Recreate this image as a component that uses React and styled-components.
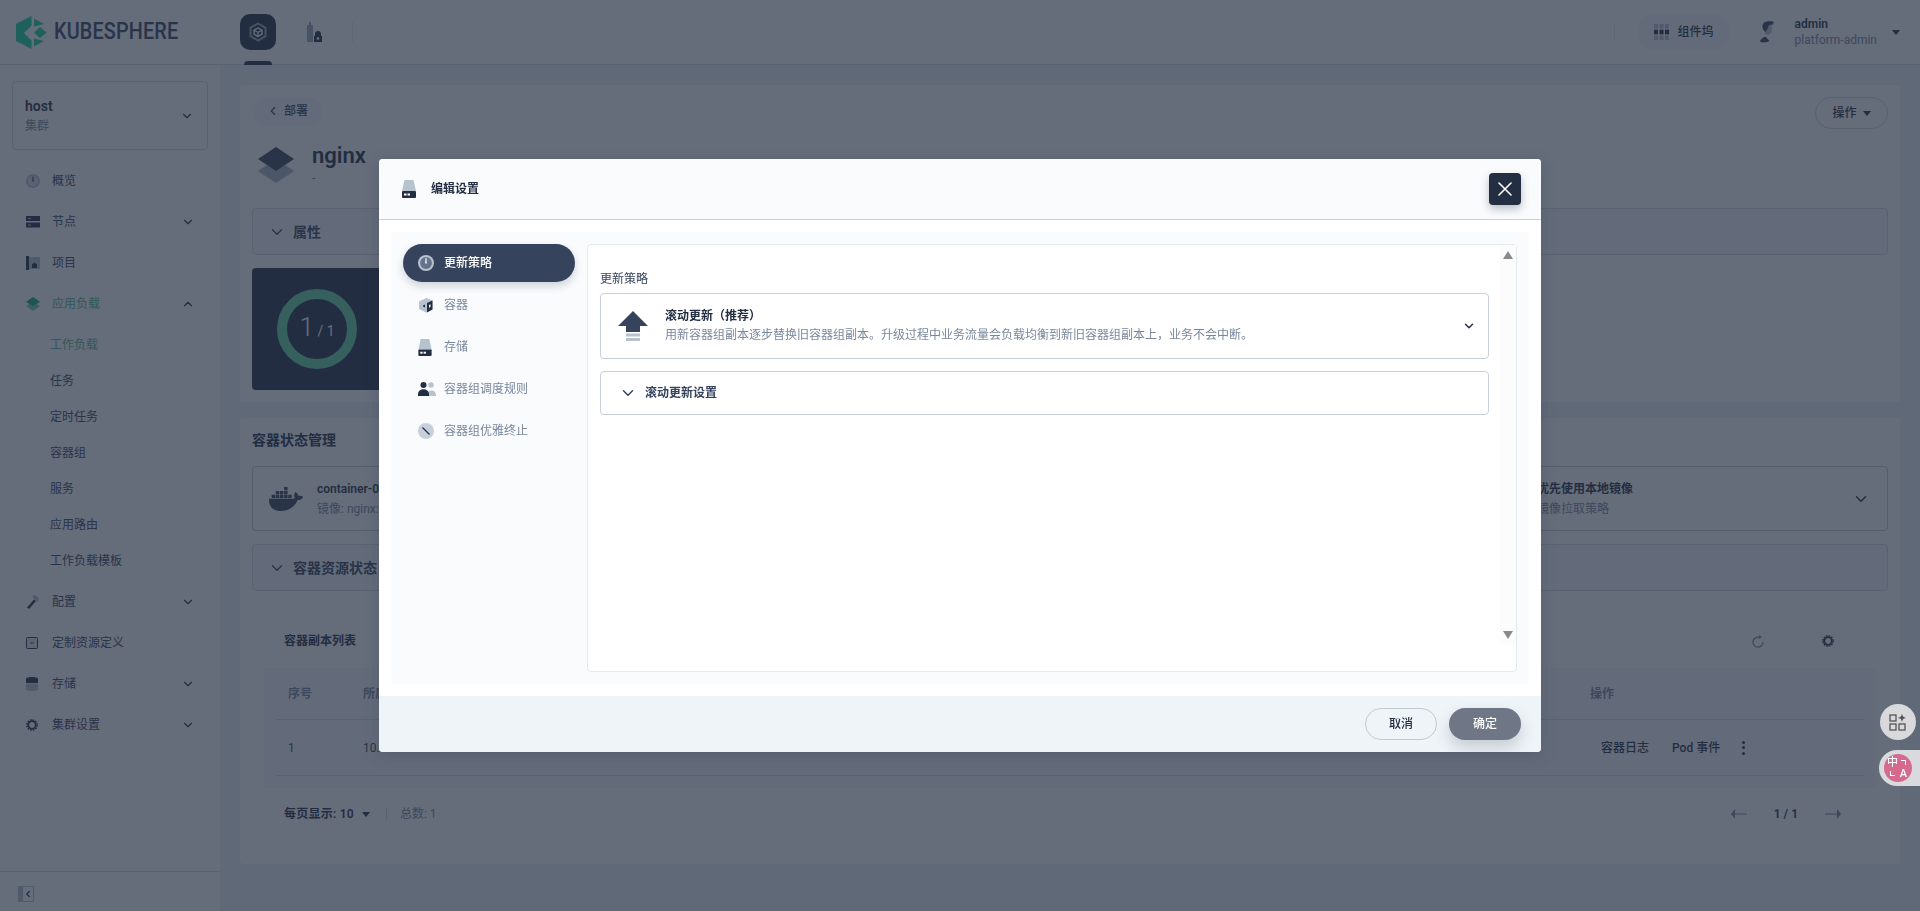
import React from 'react'
import styled, { createGlobalStyle } from 'styled-components'
import { ChevronDown, ChevronUp, ChevronLeft, X } from 'lucide-react'
import { FaDocker } from 'react-icons/fa'

const dark = '#242e42'
const mid = '#36435c'
const soft = '#79879c'
const light = '#b6c2cd'
const line = '#d8dee5'

const GlobalStyle = createGlobalStyle`
  html, body {
    margin: 0;
    height: 100%;
    overflow: hidden;
    background: #eff4f9;
  }
  * { box-sizing: border-box; }
  body {
    font-family: Roboto, "Noto Sans CJK SC", sans-serif;
    font-size: 12px;
    line-height: 20px;
    color: ${dark};
  }
`

/* icons */
const LogoIcon = () => (
  <svg width="31" height="33" viewBox="0 0 31 33" fill="#0fd69a">
    <path d="M15.5 0 0 8v17l15.5 8v-8.5L8 17l7.5-7.5z" />
    <path d="M18 2.5 28 8l-10 2.5zM18 22.5 28 25l-10 5.5z" />
    <path d="M24 11l6.5 5.5L24 22l-6-5.5z" />
  </svg>
)

const ClusterIcon = ({ fg = '#fff', bg = '#fff' }) => (
  <svg width="20" height="20" viewBox="0 0 20 20" fill="none">
    <path d="M10 1.5 17.5 5.8v8.4L10 18.5l-7.5-4.3V5.8z" stroke={bg} strokeWidth="2" opacity=".8" />
    <path d="M10 6 14 8.2v4L10 14.4 6 12.2v-4z" stroke={fg} strokeWidth="1.4" />
    <path d="M6 8.2 10 10.4l4-2.2M10 10.4v4" stroke={fg} strokeWidth="1.2" />
  </svg>
)

const LockIcon = () => (
  <svg width="16" height="22" viewBox="0 0 16 22">
    <path d="M1 4h2V1h2v3h2v17H1z" fill="#9aa7b5" />
    <path d="M8 21v-6h1v-2a3 3 0 0 1 6 0v2h1v6z" fill={dark} />
    <circle cx="12" cy="17.5" r="1.3" fill="#fff" />
  </svg>
)

const Gauge = ({ size = 14, tick = dark, bg = light, core = '#d8dee5' }) => (
  <svg width={size} height={size} viewBox="0 0 14 14">
    <circle cx="7" cy="7" r="7" fill={bg} />
    <circle cx="7" cy="7" r="5.2" fill={core} />
    <path d="M6.6 2.6h.8l.3 4.900H6.300z" fill={tick} />
  </svg>
)

const NodeIcon = () => (
  <svg width="14" height="12" viewBox="0 0 14 12">
    <rect y="0" width="14" height="5" fill={dark} />
    <rect y="6.5" width="14" height="5" fill={dark} />
    <rect x="2" y="2" width="3" height="1" fill={light} />
    <rect x="2" y="8.5" width="3" height="1" fill={light} />
  </svg>
)

const ProjectIcon = () => (
  <svg width="14" height="14" viewBox="0 0 14 14">
    <rect width="14" height="12" y="1" fill={light} />
    <rect width="3" height="14" fill={dark} />
    <path d="M6 12V8.5l2.5-2 2.5 2V12z" fill={dark} />
  </svg>
)

const Layers = ({ size = 14, top = dark, bottom = light }) => (
  <svg width={size} height={size} viewBox="0 0 36 36">
    <path d="M18 12 36 24 18 36 0 24z" fill={bottom} />
    <path d="M18 0 36 12 18 24 0 12z" fill={top} />
  </svg>
)

const HammerIcon = () => (
  <svg width="14" height="14" viewBox="0 0 14 14">
    <path d="M8 4.5 10 6 3 14l-2-1.5z" fill={dark} />
    <path d="M6.5 1.5 9 0l4 3-1 4.5L8 4z" fill={light} />
  </svg>
)

const CrdIcon = () => (
  <svg width="12" height="12" viewBox="0 0 12 12" fill="none">
    <rect x=".5" y=".5" width="11" height="11" rx="1" fill={light} fillOpacity=".35" stroke={dark} />
    <path d="M4.2 5 6 6.8 7.8 5" stroke={dark} />
  </svg>
)

const DiskIcon = ({ w = 14, h = 18 }) => (
  <svg width={w} height={h} viewBox="0 0 14 18">
    <path d="M2.5 0h9L14 11H0z" fill={light} />
    <rect y="11" width="14" height="7" rx="1" fill={dark} />
    <rect x="2" y="13.5" width="2.5" height="2" fill="#fff" />
    <rect x="5.5" y="13.5" width="2.5" height="2" fill="#fff" />
  </svg>
)

const DbIcon = () => (
  <svg width="12" height="14" viewBox="0 0 12 14">
    <path d="M0 2c0-2.6 12-2.6 12 0v4H0z" fill={dark} />
    <path d="M0 6.5h12V12c0 2.6-12 2.6-12 0z" fill={light} />
  </svg>
)

const GearIcon = ({ size = 12 }) => (
  <svg width={size} height={size} viewBox="0 0 12 12" fill="none">
    <circle cx="6" cy="6" r="3.8" stroke={dark} strokeWidth="1.8" />
    <circle cx="6" cy="6" r="5.2" stroke={dark} strokeWidth="1.4" strokeDasharray="1.6 1.13" />
  </svg>
)

const BoxIcon = () => (
  <svg width="16" height="16" viewBox="0 0 16 16">
    <path d="M1 4.5 8.5 1l6 2.5v9L8 15.5 1 12z" fill={light} />
    <path d="M9 6l5.5-2.5v9L9 15.5z" fill={dark} />
    <path d="M5 8.5l2-1v3l-2-1z" fill={dark} />
    <path d="M11 8l1.5-.7V10L11 10.7z" fill="#fff" />
  </svg>
)

const UsersIcon = () => (
  <svg width="18" height="14" viewBox="0 0 18 14">
    <circle cx="13" cy="3" r="2.8" fill={light} />
    <path d="M9 13c0-6 9-6 9 0v1H9z" fill={light} />
    <circle cx="5.5" cy="3" r="3" fill={dark} />
    <path d="M0 12c0-6.5 11-6.5 11 0v2H0z" fill={dark} />
  </svg>
)

const SlashIcon = () => (
  <svg width="16" height="16" viewBox="0 0 16 16">
    <circle cx="8" cy="8" r="8" fill="#c7d0da" />
    <path d="M4.5 4.5l7 7" stroke={dark} strokeWidth="1.3" />
  </svg>
)

const UpdateIcon = () => (
  <svg width="30" height="30" viewBox="0 0 30 30">
    <path d="M15 0 30 15H22v6H8v-6H0z" fill={mid} />
    <rect x="8" y="22.5" width="14" height="3" fill={light} />
    <rect x="8" y="27" width="14" height="3" fill={light} />
  </svg>
)

const RefreshIcon = () => (
  <svg width="12" height="13" viewBox="0 0 12 13" fill="none">
    <path d="M7.5 2.4A5 5 0 1 0 11 7" stroke={soft} strokeWidth="1.3" />
    <path d="M7 0l3 2.3-3 1.7z" fill={soft} />
  </svg>
)

const DockIcon = () => (
  <svg width="15" height="16" viewBox="0 0 15 16">
    {[0, 5.5, 11].map(x => [0, 5.7, 11.4].map(y => (
      <rect key={`${x}-${y}`} x={x} y={y} width="4" height="4.6" fill={y === 5.7 ? dark : light} />
    )))}
  </svg>
)

const AvatarIcon = () => (
  <svg width="16" height="22" viewBox="0 0 16 22">
    <path d="M6 2c3-2.500 8-2 9 .5l-2 2-.5 7-3.500 2.500-3-1z" fill={light} />
    <path d="M5 1.500C8 0 13 0 15 1l-2 2.500c-2.500 0-3.500 1-4 3L6.500 11C3 9 2.500 3.500 5 1.500z" fill={mid} />
    <path d="M1 20.500c.5-2.500 3-4 5.500-5l4 4.500c-2 1.500-7 2-9.500.5z" fill={mid} />
  </svg>
)

const GridPlusIcon = () => (
  <svg width="18" height="18" viewBox="0 0 18 18" fill="none" stroke="#555">
    <rect x="1" y="2" width="6" height="6" strokeWidth="1.3" />
    <rect x="1" y="11" width="6" height="6" strokeWidth="1.3" />
    <rect x="10" y="11" width="6" height="6" strokeWidth="1.3" />
    <path d="M13 .5C13.500 3 14 4 17 5 14 5.500 13.500 6.500 13 9.500 12.500 6.500 12 5.500 9 5 12 4 12.500 3 13 .5z" fill="#555" strokeWidth="0" />
  </svg>
)

const Ring = () => (
  <svg width="80" height="80" viewBox="0 0 80 80" fill="none">
    <circle cx="40" cy="40" r="35" stroke="#5fd6a0" strokeWidth="10" />
  </svg>
)

/* page chrome */
const Page = styled.div`
  height: 911px;
  display: flex;
  flex-direction: column;
  overflow: hidden;
`

const TopBar = styled.header`
  height: 65px;
  flex: none;
  background: #fff;
  border-bottom: 1px solid ${line};
  display: flex;
  align-items: center;
`

const Brand = styled.div`
  width: 240px;
  padding-left: 16px;
  display: flex;
  align-items: center;
  gap: 7px;
`

const BrandName = styled.span`
  font-size: 23px;
  font-weight: 500;
  line-height: 32px;
  letter-spacing: .2px;
  color: ${mid};
  transform: scaleX(.86);
  transform-origin: left center;
`

const TabButton = styled.div`
  position: relative;
  width: 36px;
  height: 36px;
  margin-right: 20px;
  border-radius: ${p => (p.$active ? '10px' : '50%')};
  background: ${p => (p.$active ? dark : 'transparent')};
  display: flex;
  align-items: center;
  justify-content: center;
  &::after {
    content: '';
    display: ${p => (p.$active ? 'block' : 'none')};
    position: absolute;
    left: 4px;
    right: 4px;
    bottom: -15px;
    height: 4px;
    border-radius: 4px 4px 0 0;
    background: ${dark};
  }
`

const BarDivider = styled.div`
  width: 1px;
  height: 20px;
  background: #e8edf2;
`

const BarRight = styled.div`
  margin-left: auto;
  display: flex;
  align-items: center;
`

const DockPill = styled.div`
  width: 93px;
  height: 36px;
  margin-left: 22px;
  padding-left: 17px;
  border-radius: 18px;
  background: #f9fbfd;
  display: flex;
  align-items: center;
  gap: 9px;
  font-weight: 500;
`

const UserBlock = styled.div`
  margin-left: 29px;
  padding-right: 20px;
  display: flex;
  align-items: center;
`

const UserText = styled.div`
  margin-left: 20px;
  margin-right: 15px;
  line-height: 16px;
`

const UserName = styled.div`
  font-weight: 600;
`

const UserRole = styled.div`
  color: ${soft};
`

const Caret = styled.span`
  display: inline-block;
  width: 0;
  height: 0;
  margin-left: ${p => p.$ml || 0}px;
  border-left: 4.5px solid transparent;
  border-right: 4.5px solid transparent;
  border-top: 5px solid ${dark};
`

const Content = styled.div`
  flex: 1;
  display: flex;
  min-height: 0;
`

/* sidebar */
const Sidebar = styled.aside`
  width: 220px;
  flex: none;
  padding-top: 16px;
  background: #fff;
  display: flex;
  flex-direction: column;
`

const ClusterBox = styled.div`
  height: 69px;
  margin: 0 12px;
  padding: 0 13px 0 12px;
  background: #fff;
  border: 1px solid ${line};
  border-radius: 4px;
  display: flex;
  align-items: center;
  justify-content: space-between;
`

const ClusterName = styled.div`
  font-size: 14px;
  font-weight: 600;
`

const ClusterKind = styled.div`
  color: ${soft};
`

const NavList = styled.nav`
  margin-top: 10px;
`

const NavRow = styled.div`
  height: 41px;
  padding: 0 26px;
  display: flex;
  align-items: center;
  color: ${p => (p.$active ? '#55bc8a' : mid)};
`

const NavIcon = styled.span`
  width: 26px;
  flex: none;
  display: flex;
  align-items: center;
`

const NavArrow = styled.span`
  margin-left: auto;
  margin-right: -1px;
  display: flex;
  color: ${dark};
`

const SubList = styled.div`
  padding: 3px 0 2px;
`

const SubRow = styled.div`
  height: 36px;
  padding-left: 50px;
  display: flex;
  align-items: center;
  color: ${p => (p.$active ? '#55bc8a' : mid)};
`

const SideFoot = styled.div`
  height: 40px;
  margin-top: auto;
  padding: 5px 0 0 18px;
  border-top: 1px solid ${line};
  display: flex;
  align-items: center;
`

const CollapseBtn = styled.div`
  width: 16px;
  height: 16px;
  background: ${light};
  display: flex;
  align-items: center;
  justify-content: flex-end;
  padding-right: 1px;
  & > span {
    width: 10px;
    height: 14px;
    background: #fff;
    display: flex;
    align-items: center;
    justify-content: center;
  }
`

/* main column */
const Main = styled.main`
  flex: 1;
  min-width: 0;
  padding: 20px 20px 0;
  display: flex;
  flex-direction: column;
  gap: 16px;
`

const Card = styled.section`
  height: ${p => p.$h}px;
  padding: 12px;
  background: #fff;
  border-radius: 4px;
`

const TopRow = styled.div`
  display: flex;
  justify-content: space-between;
  align-items: flex-start;
`

const BackPill = styled.div`
  width: 71px;
  height: 28px;
  padding-left: 14px;
  border-radius: 14px;
  background: #f9fbfd;
  display: flex;
  align-items: center;
  gap: 4px;
  color: ${mid};
  font-weight: 500;
`

const OutlineBtn = styled.div`
  width: ${p => p.$w}px;
  height: 32px;
  border: 1px solid ${p => (p.$strong ? '#c1c9d1' : line)};
  border-radius: 16px;
  display: flex;
  align-items: center;
  justify-content: center;
  gap: 6px;
  font-weight: 500;
`

const TitleRow = styled.div`
  margin-top: 18px;
  padding-left: 6px;
  height: 36px;
  display: flex;
  align-items: center;
  gap: 18px;
`

const TitleName = styled.div`
  font-size: 22px;
  font-weight: 600;
  line-height: 26px;
`

const TitleDesc = styled.div`
  color: ${soft};
  line-height: 18px;
`

const FoldBox = styled.div`
  height: 47px;
  margin-top: ${p => p.$mt}px;
  padding-left: 15px;
  border: 1px solid ${line};
  border-radius: 4px;
  background: #f9fbfd;
  display: flex;
  align-items: center;
  gap: 7px;
  font-size: 14px;
  font-weight: 600;
  color: ${mid};
`

const StatusBlock = styled.div`
  width: 300px;
  height: 122px;
  margin-top: 13px;
  padding-left: 25px;
  border-radius: 4px;
  background: ${dark};
  display: flex;
  align-items: center;
`

const RingWrap = styled.div`
  position: relative;
  width: 80px;
  height: 80px;
  display: flex;
  align-items: center;
  justify-content: center;
`

const RingText = styled.div`
  position: absolute;
  color: #fff;
  font-size: 14px;
  & > b {
    font-size: 26px;
    font-weight: 300;
  }
`

const SectionTitle = styled.div`
  font-size: 14px;
  font-weight: 600;
`

const ContainerBox = styled.div`
  height: 65px;
  margin-top: 16px;
  padding: 0 17px 0 16px;
  border: 1px solid #c7d0da;
  border-radius: 4px;
  display: flex;
  align-items: center;
`

const BoxTitle = styled.div`
  font-weight: 600;
`

const BoxDesc = styled.div`
  color: ${soft};
`

const BoxGrow = styled.div`
  flex: 1;
  margin-left: 14px;
`

const BoxRight = styled.div`
  width: 315px;
`

const TablePanel = styled.div`
  margin-top: 12px;
  height: 249px;
  padding: 25px 12px 0;
`

const PanelHead = styled.div`
  height: 26px;
  padding: 0 42px 0 20px;
  display: flex;
  align-items: center;
  font-weight: 600;
`

const PanelTools = styled.div`
  margin-left: auto;
  display: flex;
  align-items: center;
  gap: 58px;
`

const Band = styled.div`
  margin-top: 14px;
  padding: 0 12px 12px;
  background: #f9fbfd;
`

const Row = styled.div`
  height: ${p => p.$h}px;
  border-bottom: 1px solid ${line};
  padding-left: 12px;
  display: flex;
  align-items: center;
`

const CellIndex = styled.div`
  width: 75px;
  color: ${p => (p.$head ? soft : mid)};
  font-weight: ${p => (p.$head ? 600 : 400)};
`

const CellGrow = styled.div`
  flex: 1;
  color: ${p => (p.$head ? soft : mid)};
  font-weight: ${p => (p.$head ? 600 : 400)};
`

const CellActions = styled.div`
  width: 274px;
  display: flex;
  align-items: center;
  font-weight: 600;
  color: ${p => (p.$head ? soft : dark)};
`

const ActionLink = styled.span`
  margin-left: ${p => p.$ml}px;
  font-weight: 500;
`

const Kebab = styled.span`
  margin-left: 22px;
  display: flex;
  flex-direction: column;
  gap: 2.5px;
  & > i {
    width: 3px;
    height: 3px;
    border-radius: 50%;
    background: ${dark};
  }
`

const Pager = styled.div`
  height: 52px;
  padding: 0 35px 0 20px;
  display: flex;
  align-items: center;
  font-weight: 600;
`

const PagerSize = styled.span`
  letter-spacing: .25px;
`

const PagerDivider = styled.div`
  width: 1px;
  height: 14px;
  margin: 0 13px 0 16px;
  background: ${line};
`

const PagerTotal = styled.span`
  color: ${soft};
  font-weight: 400;
`

const PagerNav = styled.div`
  margin-left: auto;
  display: flex;
  align-items: center;
  gap: 27px;
`

const ArrowIcon = styled.svg`
  display: block;
  transform: ${p => (p.$flip ? 'scaleX(-1)' : 'none')};
`

/* modal */
const Overlay = styled.div`
  position: fixed;
  inset: 0;
  background: rgba(35, 45, 65, .7);
  display: flex;
  align-items: center;
  justify-content: center;
`

const Modal = styled.div`
  width: 1162px;
  height: 593px;
  border-radius: 4px;
  background: #fff;
  box-shadow: 0 4px 16px 0 rgba(35, 45, 65, .2);
  display: flex;
  flex-direction: column;
  overflow: hidden;
`

const ModalHead = styled.div`
  height: 61px;
  flex: none;
  padding: 0 20px 0 23px;
  background: #f9fbfd;
  border-bottom: 1px solid #c7d0da;
  display: flex;
  align-items: center;
  gap: 15px;
  font-weight: 600;
`

const CloseBtn = styled.div`
  width: 32px;
  height: 32px;
  margin-left: auto;
  border-radius: 4px;
  background: ${dark};
  color: #fff;
  box-shadow: 0 4px 8px 0 rgba(36, 46, 66, .3);
  display: flex;
  align-items: center;
  justify-content: center;
`

const ModalBody = styled.div`
  flex: 1;
  min-height: 0;
  padding: 12px;
`

const InnerPanel = styled.div`
  height: 100%;
  padding: 12px;
  background: #f9fbfd;
  border-radius: 4px;
  display: flex;
  gap: 12px;
`

const StepList = styled.div`
  width: 172px;
  flex: none;
  display: flex;
  flex-direction: column;
  gap: 4px;
`

const Step = styled.div`
  height: 38px;
  padding-left: 15px;
  border-radius: 19px;
  display: flex;
  align-items: center;
  gap: 10px;
  background: ${p => (p.$active ? mid : 'transparent')};
  color: ${p => (p.$active ? '#fff' : soft)};
  font-weight: ${p => (p.$active ? 500 : 400)};
  box-shadow: ${p => (p.$active ? '0 4px 8px 0 rgba(36, 46, 66, .2)' : 'none')};
`

const StepIcon = styled.span`
  width: 19px;
  margin-right: -3px;
  display: flex;
  align-items: center;
`

const Pane = styled.div`
  flex: 1;
  min-width: 0;
  border: 1px solid #e3e9ef;
  border-radius: 4px;
  background: #fff;
  display: flex;
  align-items: flex-start;
`

const PaneForm = styled.div`
  flex: 1;
  min-width: 0;
  padding: 24px 11px 0 12px;
`

const FieldLabel = styled.div`
  margin-bottom: 4px;
  color: ${mid};
`

const SelectBox = styled.div`
  height: 66px;
  padding: 0 12px 0 17px;
  border: 1px solid #c7d0da;
  border-radius: 4px;
  display: flex;
  align-items: center;
  gap: 17px;
`

const SelectText = styled.div`
  flex: 1;
  line-height: 19px;
`

const SelectTitle = styled.div`
  font-weight: 600;
`

const SelectDesc = styled.div`
  color: ${soft};
`

const SettingsBox = styled.div`
  height: 44px;
  margin-top: 12px;
  padding-left: 18px;
  border: 1px solid #c7d0da;
  border-radius: 4px;
  display: flex;
  align-items: center;
  gap: 8px;
  font-weight: 600;
  color: ${mid};
`

const ScrollTrack = styled.div`
  width: 16px;
  height: 400px;
  flex: none;
  padding: 6px 0;
  background: #fcfcfc;
  display: flex;
  flex-direction: column;
  align-items: center;
  justify-content: space-between;
`

const ScrollArrow = styled.span`
  width: 0;
  height: 0;
  border-left: 5px solid transparent;
  border-right: 5px solid transparent;
  border-bottom: ${p => (p.$down ? '0' : '8px solid #8a8a8a')};
  border-top: ${p => (p.$down ? '8px solid #8a8a8a' : '0')};
`

const ModalFoot = styled.div`
  height: 56px;
  flex: none;
  padding-right: 20px;
  background: #eff4f9;
  display: flex;
  align-items: center;
  justify-content: flex-end;
  gap: 12px;
`

const PrimaryBtn = styled.div`
  width: 72px;
  height: 32px;
  border-radius: 16px;
  background: #6f7787;
  color: #fff;
  font-weight: 500;
  box-shadow: 0 8px 16px 0 rgba(36, 46, 66, .2);
  display: flex;
  align-items: center;
  justify-content: center;
`

/* widgets floating over the overlay */
const FloatCircle = styled.div`
  position: fixed;
  left: 1880px;
  top: 704px;
  width: 36px;
  height: 36px;
  border-radius: 50%;
  background: #d9d9dc;
  display: flex;
  align-items: center;
  justify-content: center;
`

const FloatTab = styled.div`
  position: fixed;
  left: 1879px;
  right: 0;
  top: 750px;
  height: 36px;
  padding-left: 5px;
  border-radius: 18px 0 0 18px;
  background: #d9dade;
  display: flex;
  align-items: center;
`

const Translate = styled.div`
  width: 28px;
  height: 28px;
  padding: 3px;
  border-radius: 50%;
  background: #d6698e;
  color: #fff;
  font-size: 11px;
  line-height: 11px;
  font-weight: 500;
  display: grid;
  grid-template-columns: 11px 11px;
  grid-template-rows: 11px 11px;
  place-items: center;
`

const CornerMark = styled.i`
  width: 5px;
  height: 5px;
  border: 1px solid #fff;
  border-left: ${p => (p.$low ? '1px solid #fff' : '0')};
  border-right: ${p => (p.$low ? '0' : '1px solid #fff')};
  border-top: ${p => (p.$low ? '0' : '1px solid #fff')};
  border-bottom: ${p => (p.$low ? '1px solid #fff' : '0')};
`

const menuTop = [
  { label: '概览', icon: <Gauge /> },
  { label: '节点', icon: <NodeIcon />, arrow: true },
  { label: '项目', icon: <ProjectIcon /> }
]

const subItems = ['工作负载', '任务', '定时任务', '容器组', '服务', '应用路由', '工作负载模板']

const menuBottom = [
  { label: '配置', icon: <HammerIcon />, arrow: true },
  { label: '定制资源定义', icon: <CrdIcon /> },
  { label: '存储', icon: <DbIcon />, arrow: true },
  { label: '集群设置', icon: <GearIcon />, arrow: true }
]

const steps = [
  { label: '更新策略', icon: <Gauge size={16} tick="#fff" bg="#b6c2cd" core="#66738c" /> },
  { label: '容器', icon: <BoxIcon /> },
  { label: '存储', icon: <DiskIcon w={14} h={17} /> },
  { label: '容器组调度规则', icon: <UsersIcon /> },
  { label: '容器组优雅终止', icon: <SlashIcon /> }
]

const PagerArrow = ({ flip }) => (
  <ArrowIcon $flip={flip} width="16" height="10" viewBox="0 0 16 10">
    <path d="M4 0v10L0 5z" fill={soft} />
    <rect x="4" y="4.500" width="12" height="1" fill={soft} />
  </ArrowIcon>
)

function NavEntry({ item }) {
  return (
    <NavRow>
      <NavIcon>{item.icon}</NavIcon>
      {item.label}
      {item.arrow && <NavArrow><ChevronDown size={14} strokeWidth={2} /></NavArrow>}
    </NavRow>
  )
}

function App() {
  return (
    <>
      <GlobalStyle />
      <Page>
        <TopBar>
          <Brand>
            <LogoIcon />
            <BrandName>KUBESPHERE</BrandName>
          </Brand>
          <TabButton $active><ClusterIcon fg="#fff" bg="#b6c2cd" /></TabButton>
          <TabButton><LockIcon /></TabButton>
          <BarDivider />
          <BarRight>
            <BarDivider />
            <DockPill><DockIcon />组件坞</DockPill>
            <UserBlock>
              <AvatarIcon />
              <UserText>
                <UserName>admin</UserName>
                <UserRole>platform-admin</UserRole>
              </UserText>
              <Caret />
            </UserBlock>
          </BarRight>
        </TopBar>

        <Content>
          <Sidebar>
            <ClusterBox>
              <div>
                <ClusterName>host</ClusterName>
                <ClusterKind>集群</ClusterKind>
              </div>
              <ChevronDown size={14} strokeWidth={2} />
            </ClusterBox>
            <NavList>
              {menuTop.map(item => <NavEntry key={item.label} item={item} />)}
              <NavRow $active>
                <NavIcon><Layers top="#0fb37f" bottom="#6fd0ae" /></NavIcon>
                应用负载
                <NavArrow><ChevronUp size={14} strokeWidth={2} /></NavArrow>
              </NavRow>
              <SubList>
                {subItems.map((label, i) => <SubRow key={label} $active={i === 0}>{label}</SubRow>)}
              </SubList>
              {menuBottom.map(item => <NavEntry key={item.label} item={item} />)}
            </NavList>
            <SideFoot>
              <CollapseBtn><span><ChevronLeft size={10} strokeWidth={3} /></span></CollapseBtn>
            </SideFoot>
          </Sidebar>

          <Main>
            <Card $h={317}>
              <TopRow>
                <BackPill><ChevronLeft size={14} strokeWidth={2} />部署</BackPill>
                <OutlineBtn $w={73}>操作<Caret /></OutlineBtn>
              </TopRow>
              <TitleRow>
                <Layers size={36} top={mid} bottom="#a9b4c1" />
                <div>
                  <TitleName>nginx</TitleName>
                  <TitleDesc>-</TitleDesc>
                </div>
              </TitleRow>
              <FoldBox $mt={25}><ChevronDown size={18} strokeWidth={2} />属性</FoldBox>
              <StatusBlock>
                <RingWrap>
                  <Ring />
                  <RingText><b>1</b> / 1</RingText>
                </RingWrap>
              </StatusBlock>
            </Card>

            <Card $h={446}>
              <SectionTitle>容器状态管理</SectionTitle>
              <ContainerBox>
                <FaDocker size={34} color={mid} />
                <BoxGrow>
                  <BoxTitle>container-0</BoxTitle>
                  <BoxDesc>镜像: nginx:latest</BoxDesc>
                </BoxGrow>
                <BoxRight>
                  <BoxTitle>优先使用本地镜像</BoxTitle>
                  <BoxDesc>镜像拉取策略</BoxDesc>
                </BoxRight>
                <ChevronDown size={18} strokeWidth={2} />
              </ContainerBox>
              <FoldBox $mt={13}><ChevronDown size={18} strokeWidth={2} />容器资源状态</FoldBox>
              <TablePanel>
                <PanelHead>
                  容器副本列表
                  <PanelTools>
                    <RefreshIcon />
                    <GearIcon />
                  </PanelTools>
                </PanelHead>
                <Band>
                  <Row $h={52}>
                    <CellIndex $head>序号</CellIndex>
                    <CellGrow $head>所属节点</CellGrow>
                    <CellActions $head>操作</CellActions>
                  </Row>
                  <Row $h={56}>
                    <CellIndex>1</CellIndex>
                    <CellGrow>10.233.90.3</CellGrow>
                    <CellActions>
                      <ActionLink $ml={11}>容器日志</ActionLink>
                      <ActionLink $ml={23}>Pod 事件</ActionLink>
                      <Kebab><i /><i /><i /></Kebab>
                    </CellActions>
                  </Row>
                </Band>
                <Pager>
                  <PagerSize>每页显示: 10</PagerSize>
                  <Caret $ml={8} />
                  <PagerDivider />
                  <PagerTotal>总数: 1</PagerTotal>
                  <PagerNav>
                    <PagerArrow />
                    1 / 1
                    <PagerArrow flip />
                  </PagerNav>
                </Pager>
              </TablePanel>
            </Card>
          </Main>
        </Content>
      </Page>

      <Overlay>
        <Modal>
          <ModalHead>
            <DiskIcon />
            编辑设置
            <CloseBtn><X size={24} strokeWidth={1.6} /></CloseBtn>
          </ModalHead>
          <ModalBody>
            <InnerPanel>
              <StepList>
                {steps.map((s, i) => (
                  <Step key={s.label} $active={i === 0}>
                    <StepIcon>{s.icon}</StepIcon>
                    {s.label}
                  </Step>
                ))}
              </StepList>
              <Pane>
                <PaneForm>
                  <FieldLabel>更新策略</FieldLabel>
                  <SelectBox>
                    <UpdateIcon />
                    <SelectText>
                      <SelectTitle>滚动更新（推荐）</SelectTitle>
                      <SelectDesc>用新容器组副本逐步替换旧容器组副本。升级过程中业务流量会负载均衡到新旧容器组副本上，业务不会中断。</SelectDesc>
                    </SelectText>
                    <ChevronDown size={14} strokeWidth={2.5} />
                  </SelectBox>
                  <SettingsBox>
                    <ChevronDown size={18} strokeWidth={2} />
                    滚动更新设置
                  </SettingsBox>
                </PaneForm>
                <ScrollTrack>
                  <ScrollArrow />
                  <ScrollArrow $down />
                </ScrollTrack>
              </Pane>
            </InnerPanel>
          </ModalBody>
          <ModalFoot>
            <OutlineBtn $strong $w={72}>取消</OutlineBtn>
            <PrimaryBtn>确定</PrimaryBtn>
          </ModalFoot>
        </Modal>
      </Overlay>

      <FloatCircle><GridPlusIcon /></FloatCircle>
      <FloatTab>
        <Translate>
          <span>中</span>
          <CornerMark />
          <CornerMark $low />
          <span>A</span>
        </Translate>
      </FloatTab>
    </>
  )
}

export default App
